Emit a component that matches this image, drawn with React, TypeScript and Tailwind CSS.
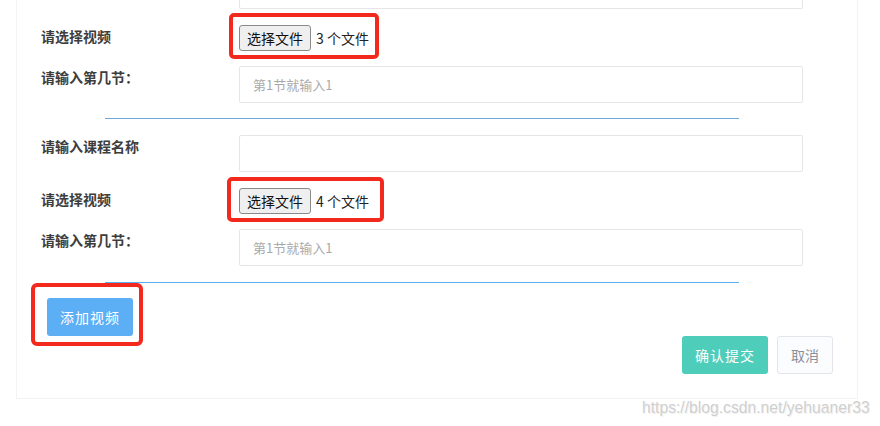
import React from 'react';

const CJK = '"Noto Sans CJK SC", "Noto Sans", sans-serif';

const Label = ({ children }: { children?: React.ReactNode }) => (
  <div className="w-[198px] shrink-0 pt-[1px] text-[14px] leading-[20px] font-bold text-[#3d3d3d]">{children}</div>
);

const TextRow = ({ label, placeholder }: { label?: string; placeholder?: string }) => (
  <div className="flex items-start">
    <Label>{label}</Label>
    <div className="w-[564px] h-[37px] border border-[#e6e6e6] rounded-[2px] bg-white flex items-center pl-[13px] text-[13px] text-[#aaaaaa]">
      {placeholder}
    </div>
  </div>
);

const FileRow = ({ count, box }: { count: number; box: string }) => (
  <div className="flex items-start h-[26px]">
    <Label>请选择视频</Label>
    <div className="relative flex items-center h-[26px]">
      <div className={`absolute border-[4px] border-[#f2291c] rounded-[5px] ${box}`} />
      <div className="relative h-[26px] w-[72px] flex items-center justify-center bg-[#efefef] border border-[#8a8a8a] rounded-[3px] text-[14px] text-[#111]">
        选择文件
      </div>
      <span className="relative ml-[5px] text-[14px] text-[#222]">{count} 个文件</span>
    </div>
  </div>
);

const Divider = ({ color }: { color: string }) => (
  <div className={`ml-[64px] w-[634px] h-px ${color}`} />
);

export default function App() {
  return (
    <div className="relative w-[880px] h-[426px] overflow-hidden bg-white" style={{ fontFamily: CJK }}>
      <div className="ml-[16px] w-[842px] -mt-[28px] border-x border-b border-[#f3f3f3] bg-white pl-[24px] pr-[24px] pb-[24px]">
        <div className="flex flex-col">
          {/* row scrolled out of view above */}
          <TextRow />
          <div className="mt-[16px]">
            <FileRow count={3} box="-left-[10px] -top-[12px] w-[150px] h-[46px]" />
          </div>
          <div className="mt-[15px]">
            <TextRow label="请输入第几节：" placeholder="第1节就输入1" />
          </div>
          <div className="mt-[15px]">
            <Divider color="bg-[#6ca7d8]" />
          </div>
          <div className="mt-[16px]">
            <TextRow label="请输入课程名称" />
          </div>
          <div className="mt-[16px]">
            <FileRow count={4} box="-left-[12px] -top-[11px] w-[157px] h-[45px]" />
          </div>
          <div className="mt-[15px]">
            <TextRow label="请输入第几节：" placeholder="第1节就输入1" />
          </div>
          <div className="mt-[16px]">
            <Divider color="bg-[#58aff0]" />
          </div>
          <div className="mt-[15px] pl-[6px]">
            <div className="relative inline-flex">
              <div className="absolute -left-[16px] -top-[15px] w-[112px] h-[63px] border-[4px] border-[#f2291c] rounded-[6px]" />
              <button className="relative h-[38px] w-[86px] bg-[#5caef5] rounded-[3px] text-white text-[14px] tracking-[1px]">
                添加视频
              </button>
            </div>
          </div>
          <div className="flex justify-end gap-[9px]">
            <button className="h-[38px] w-[86px] bg-[#4ecdba] rounded-[3px] text-white text-[14px] tracking-[1px]">
              确认提交
            </button>
            <button className="h-[38px] w-[56px] bg-[#fbfcfe] border border-[#e2e5ea] rounded-[3px] text-[#8a909a] text-[14px]">
              取消
            </button>
          </div>
        </div>
      </div>
      <div
        className="absolute left-[642px] top-[398px] text-[15.7px] leading-[20px] text-[#cfcfcf]"
        style={{ fontFamily: '"Liberation Sans", Arial, sans-serif', textShadow: '0 0 1px #fff, 1px 1px 1px #eee' }}
      >
        https://blog.csdn.net/yehuaner33
      </div>
    </div>
  );
}
